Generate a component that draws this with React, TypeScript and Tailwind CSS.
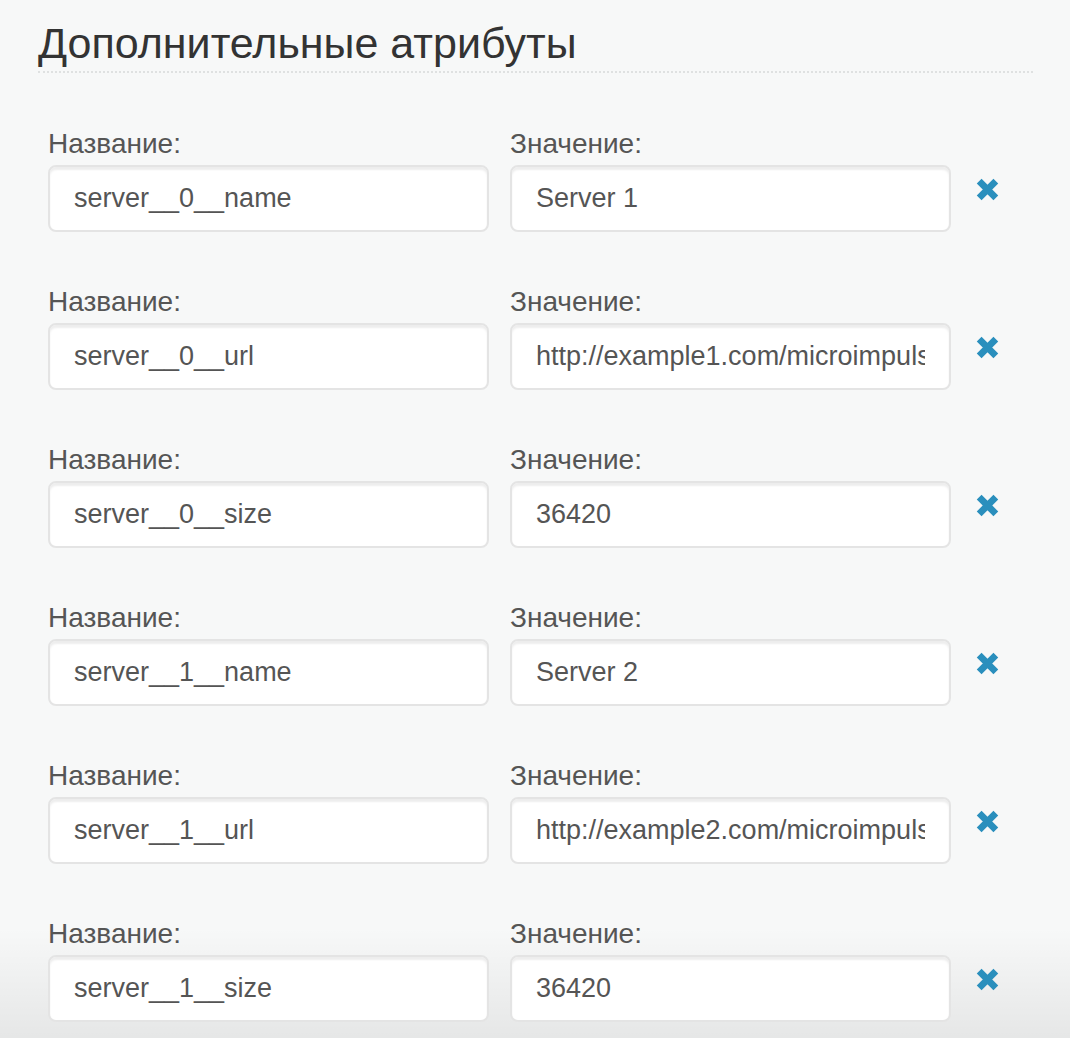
import React from 'react';

const rows = [
  { name: 'server__0__name', value: 'Server 1' },
  { name: 'server__0__url', value: 'http://example1.com/microimpuls/update.zip' },
  { name: 'server__0__size', value: '36420' },
  { name: 'server__1__name', value: 'Server 2' },
  { name: 'server__1__url', value: 'http://example2.com/microimpuls/update.zip' },
  { name: 'server__1__size', value: '36420' },
];

function Field({ label, value }: { label: string; value: string }) {
  return (
    <div className="flex flex-col">
      <label className="text-[28px] leading-[32px] text-[#555] pt-[3px] mb-[5px]">{label}</label>
      <input
        readOnly
        value={value}
        className="w-full h-[67px] px-[24px] text-[27px] text-[#555] bg-white border-2 border-[#e4e4e4] rounded-[8px] shadow-[inset_0_3px_2px_rgba(0,0,0,0.07)] outline-none"
      />
    </div>
  );
}

export default function App() {
  return (
    <div className="relative min-h-[1038px] bg-[#f7f8f8] overflow-hidden" style={{ fontFamily: '"Liberation Sans", Arial, sans-serif' }}>
      {/* footer shadow, behind content */}
      <div className="pointer-events-none absolute left-0 right-0 bottom-0 h-[110px] bg-gradient-to-b from-transparent to-black/[0.07]" />

      <div className="relative pl-[38px] pr-[37px] pt-[20px]">
        <h2 className="text-[43px] leading-[46px] text-[#333] font-normal pb-[5px] border-b-2 border-dotted border-[#dfe1e1]">
          Дополнительные атрибуты
        </h2>

        <div className="flex flex-col gap-[51px] pt-[52px] pl-[10px]">
          {rows.map((row) => (
            <div key={row.name} className="grid grid-cols-[441px_441px_1fr] gap-x-[21px]">
              <Field label="Название:" value={row.name} />
              <Field label="Значение:" value={row.value} />
              <div className="flex pt-[52px] pl-[3px]">
                <button type="button" className="w-[25px] h-[25px] text-[#2a8fbd]">
                  <svg viewBox="0 0 24 24" width="25" height="25">
                    <path d="M4 4 L20 20 M20 4 L4 20" stroke="currentColor" strokeWidth="6.5" strokeLinecap="butt" />
                  </svg>
                </button>
              </div>
            </div>
          ))}
        </div>
      </div>
    </div>
  );
}
